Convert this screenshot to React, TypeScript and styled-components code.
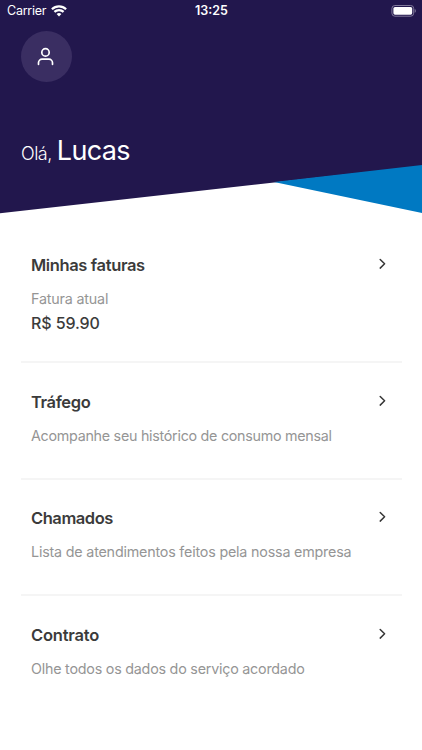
import React from "react";
import styled, { createGlobalStyle } from "styled-components";

const GlobalStyle = createGlobalStyle`
  * { box-sizing: border-box; }
  body { margin: 0; background: #fff; font-family: Inter, "Liberation Sans", sans-serif; }
  h1, h2, p { margin: 0; font-weight: 400; }
`;

const Screen = styled.div`
  width: 422px;
  height: 750px;
  overflow: hidden;
  background: #fff;
`;

const Header = styled.header`
  position: relative;
  height: 214px;
  color: #fff;
`;

const HeaderShape = styled.svg`
  position: absolute;
  inset: 0;
  display: block;
`;

const HeaderContent = styled.div`
  position: relative;
  display: flex;
  flex-direction: column;
`;

const StatusBar = styled.div`
  display: grid;
  grid-template-columns: 1fr auto 1fr;
  align-items: center;
  height: 22px;
  padding: 0 6px 0 7px;
`;

const Carrier = styled.div`
  display: flex;
  align-items: center;
  gap: 5px;
  font-size: 12.5px;
  line-height: 22px;
  letter-spacing: -0.25px;
`;

const Clock = styled.div`
  font-size: 12.5px;
  font-weight: 600;
  line-height: 22px;
`;

const Battery = styled.svg`
  justify-self: end;
`;

const Avatar = styled.button`
  display: flex;
  align-items: center;
  justify-content: center;
  width: 51px;
  height: 51px;
  margin: 9px 0 0 20.5px;
  padding: 0;
  border: 0;
  border-radius: 50%;
  background: #3a2e62;
  color: #fff;
`;

const Greeting = styled.h1`
  display: flex;
  align-items: baseline;
  gap: 5px;
  margin: 51px 0 0 21px;
  line-height: 36px;
`;

const Hello = styled.span`
  font-size: 18px;
  font-weight: 300;
  letter-spacing: -0.5px;
`;

const Name = styled.span`
  font-size: 27px;
  letter-spacing: -0.65px;
`;

const Menu = styled.main`
  display: flex;
  flex-direction: column;
  padding: 12px 20px 0 21px;
`;

const Item = styled.section<{ $height: number; $top: number; $last?: boolean }>`
  height: ${(p) => p.$height}px;
  padding: ${(p) => p.$top}px 10px 0;
  border-bottom: ${(p) => (p.$last ? "0" : "2px solid #f5f5f5")};
`;

const ItemHead = styled.div`
  display: flex;
  justify-content: space-between;
  height: 24px;
`;

const Title = styled.h2<{ $tracking: number }>`
  font-size: 16.5px;
  font-weight: 600;
  line-height: 24px;
  color: #3b3b3b;
  letter-spacing: ${(p) => p.$tracking}px;
`;

const Chevron = styled.svg`
  margin: 4px 4px 0 0;
`;

const Description = styled.p<{ $tracking: number }>`
  margin-top: 12px;
  font-size: 14.3px;
  line-height: 20px;
  color: #959595;
  letter-spacing: ${(p) => p.$tracking}px;
`;

const Amount = styled.p`
  margin-top: 3px;
  font-size: 16px;
  font-weight: 500;
  line-height: 22px;
  color: #3b3b3b;
  letter-spacing: -0.1px;
`;

type Entry = {
  title: string;
  text: string;
  amount?: string;
  height: number;
  top: number;
  titleTracking: number;
  textTracking: number;
};

const entries: Entry[] = [
  { title: "Minhas faturas", text: "Fatura atual", amount: "R$ 59.90", height: 137, top: 27, titleTracking: -0.37, textTracking: -0.18 },
  { title: "Tráfego", text: "Acompanhe seu histórico de consumo mensal", height: 117, top: 27, titleTracking: -0.37, textTracking: -0.27 },
  { title: "Chamados", text: "Lista de atendimentos feitos pela nossa empresa", height: 116, top: 26, titleTracking: -0.45, textTracking: -0.19 },
  { title: "Contrato", text: "Olhe todos os dados do serviço acordado", height: 116, top: 27, titleTracking: -0.2, textTracking: -0.22 },
];

const WifiIcon = () => (
  <svg width="16" height="12" viewBox="0 0 16 12" fill="none" stroke="#fff" strokeWidth="2.2">
    <path d="M.9 4.2a10.2 10.2 0 0 1 14.2 0" />
    <path d="M3.4 6.9a6.6 6.6 0 0 1 9.2 0" />
    <path d="M8 11.5 5.6 9.1a3.5 3.5 0 0 1 4.8 0Z" fill="#fff" stroke="none" />
  </svg>
);

const App = () => (
  <Screen>
    <GlobalStyle />
    <Header>
      <HeaderShape width="422" height="214" viewBox="0 0 422 214">
        <path d="M0 0h422v166L0 213.2Z" fill="#22174d" />
        <path d="M274 182.1 422 165v48Z" fill="#0079c2" />
      </HeaderShape>
      <HeaderContent>
        <StatusBar>
          <Carrier>
            Carrier
            <WifiIcon />
          </Carrier>
          <Clock>13:25</Clock>
          <Battery width="25" height="12" viewBox="0 0 25 12">
            <rect x=".9" y=".5" width="21.8" height="10.7" rx="3" fill="none" stroke="#81799b" />
            <rect x="2.4" y="2" width="18.8" height="7.7" rx="1.6" fill="#fff" />
            <path d="M23.7 4v3.8c1.5-.7 1.5-3.1 0-3.8" fill="#81799b" />
          </Battery>
        </StatusBar>
        <Avatar aria-label="Perfil">
          <svg width="20" height="20" viewBox="0 0 20 20" fill="none" stroke="#fff" strokeWidth="1.7" strokeLinecap="round">
            <circle cx="9.5" cy="5.4" r="3.7" />
            <path d="M2.5 17.3v-1.5a3.6 3.6 0 0 1 3.6-3.6h6.8a3.6 3.6 0 0 1 3.6 3.6v1.5" />
          </svg>
        </Avatar>
        <Greeting>
          <Hello>Olá,</Hello>
          <Name>Lucas</Name>
        </Greeting>
      </HeaderContent>
    </Header>
    <Menu>
      {entries.map((e, i) => (
        <Item key={e.title} $height={e.height} $top={e.top} $last={i === entries.length - 1}>
          <ItemHead>
            <Title $tracking={e.titleTracking}>{e.title}</Title>
            <Chevron width="12" height="14" viewBox="0 0 12 14" fill="none" stroke="#373737" strokeWidth="1.5" strokeLinecap="round" strokeLinejoin="round">
              <path d="m4.2 2.5 4.4 4.3-4.4 4.3" />
            </Chevron>
          </ItemHead>
          <Description $tracking={e.textTracking}>{e.text}</Description>
          {e.amount && <Amount>{e.amount}</Amount>}
        </Item>
      ))}
    </Menu>
  </Screen>
);

export default App;
